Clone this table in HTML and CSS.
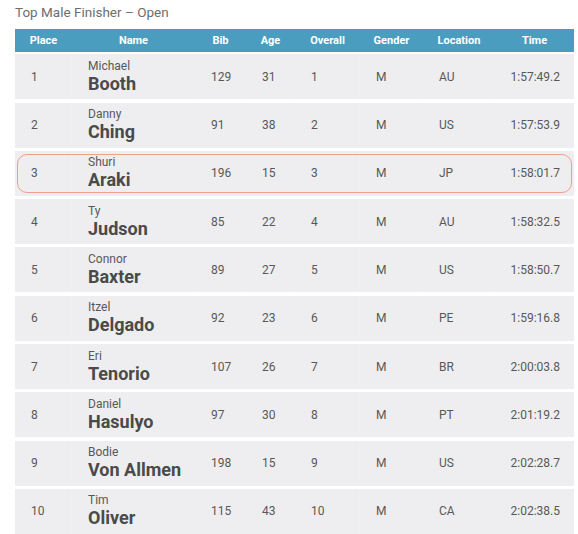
FILE: index.html
```html
<!DOCTYPE html>
<html>
<head>
<meta charset="utf-8">
<link rel="stylesheet" href="styles.css">
</head>
<body>
<div class="page">
  <h1 class="title">Top Male Finisher – Open</h1>
  <div class="results">
    <div class="row head">
      <div class="c">Place</div><div class="c">Name</div><div class="c">Bib</div><div class="c">Age</div><div class="c">Overall</div><div class="c">Gender</div><div class="c">Location</div><div class="c">Time</div>
    </div>
    <div class="row">
      <div class="c">1</div><div class="c name"><span class="first">Michael</span><span class="last">Booth</span></div><div class="c">129</div><div class="c">31</div><div class="c">1</div><div class="c">M</div><div class="c">AU</div><div class="c time">1:57:49.2</div>
    </div>
    <div class="row">
      <div class="c">2</div><div class="c name"><span class="first">Danny</span><span class="last">Ching</span></div><div class="c">91</div><div class="c">38</div><div class="c">2</div><div class="c">M</div><div class="c">US</div><div class="c time">1:57:53.9</div>
    </div>
    <div class="row highlight">
      <div class="c">3</div><div class="c name"><span class="first">Shuri</span><span class="last">Araki</span></div><div class="c">196</div><div class="c">15</div><div class="c">3</div><div class="c">M</div><div class="c">JP</div><div class="c time">1:58:01.7</div>
    </div>
    <div class="row">
      <div class="c">4</div><div class="c name"><span class="first">Ty</span><span class="last">Judson</span></div><div class="c">85</div><div class="c">22</div><div class="c">4</div><div class="c">M</div><div class="c">AU</div><div class="c time">1:58:32.5</div>
    </div>
    <div class="row">
      <div class="c">5</div><div class="c name"><span class="first">Connor</span><span class="last">Baxter</span></div><div class="c">89</div><div class="c">27</div><div class="c">5</div><div class="c">M</div><div class="c">US</div><div class="c time">1:58:50.7</div>
    </div>
    <div class="row">
      <div class="c">6</div><div class="c name"><span class="first">Itzel</span><span class="last">Delgado</span></div><div class="c">92</div><div class="c">23</div><div class="c">6</div><div class="c">M</div><div class="c">PE</div><div class="c time">1:59:16.8</div>
    </div>
    <div class="row">
      <div class="c">7</div><div class="c name"><span class="first">Eri</span><span class="last">Tenorio</span></div><div class="c">107</div><div class="c">26</div><div class="c">7</div><div class="c">M</div><div class="c">BR</div><div class="c time">2:00:03.8</div>
    </div>
    <div class="row">
      <div class="c">8</div><div class="c name"><span class="first">Daniel</span><span class="last">Hasulyo</span></div><div class="c">97</div><div class="c">30</div><div class="c">8</div><div class="c">M</div><div class="c">PT</div><div class="c time">2:01:19.2</div>
    </div>
    <div class="row">
      <div class="c">9</div><div class="c name"><span class="first">Bodie</span><span class="last">Von Allmen</span></div><div class="c">198</div><div class="c">15</div><div class="c">9</div><div class="c">M</div><div class="c">US</div><div class="c time">2:02:28.7</div>
    </div>
    <div class="row">
      <div class="c">10</div><div class="c name"><span class="first">Tim</span><span class="last">Oliver</span></div><div class="c">115</div><div class="c">43</div><div class="c">10</div><div class="c">M</div><div class="c">CA</div><div class="c time">2:02:38.5</div>
    </div>
  </div>
</div>
</body>
</html>
```
FILE: styles.css
```css
html, body {
  margin: 0;
  padding: 0;
  background: #ffffff;
}
body {
  font-family: Roboto, "Liberation Sans", Arial, sans-serif;
  color: #555555;
}
.page {
  padding: 3px 4px 0 15px;
}
.title {
  margin: 0 0 7px 0;
  font-size: 13.5px;
  font-weight: 400;
  line-height: 19px;
  color: #6e6e6e;
}
.results {
  width: 559px;
  display: flex;
  flex-direction: column;
  gap: 3.3px;
}
.row {
  display: grid;
  grid-template-columns: 57px 123px 51px 49px 65px 63px 72px 79px;
  height: 45px;
  background: #eeeef0;
  position: relative;
}
.row .c {
  display: flex;
  align-items: center;
  padding-left: 16px;
  font-size: 12px;
  color: #585858;
  border-right: 1px solid #f0f0f2;
}
.row .c:last-child {
  border-right: none;
}
.row .time {
  justify-content: flex-end;
  padding-left: 0;
  padding-right: 14px;
}
.row .name {
  flex-direction: column;
  align-items: flex-start;
  justify-content: center;
}
.first {
  font-size: 12px;
  line-height: 13px;
  color: #585858;
}
.last {
  font-size: 18px;
  font-weight: 700;
  line-height: 21px;
  color: #4a4a4a;
}
.row.head {
  height: 23px;
  background: #4b9dc0;
  margin-bottom: -1px;
}
.row.head .c {
  justify-content: center;
  padding: 0;
  color: #ffffff;
  font-weight: 700;
  font-size: 11px;
  border-right: none;
}
.row.highlight::after {
  content: "";
  position: absolute;
  left: 2px;
  right: 2px;
  top: 3px;
  bottom: 3px;
  border: 1.5px solid #ef9f8c;
  border-radius: 10px;
  pointer-events: none;
}
```
